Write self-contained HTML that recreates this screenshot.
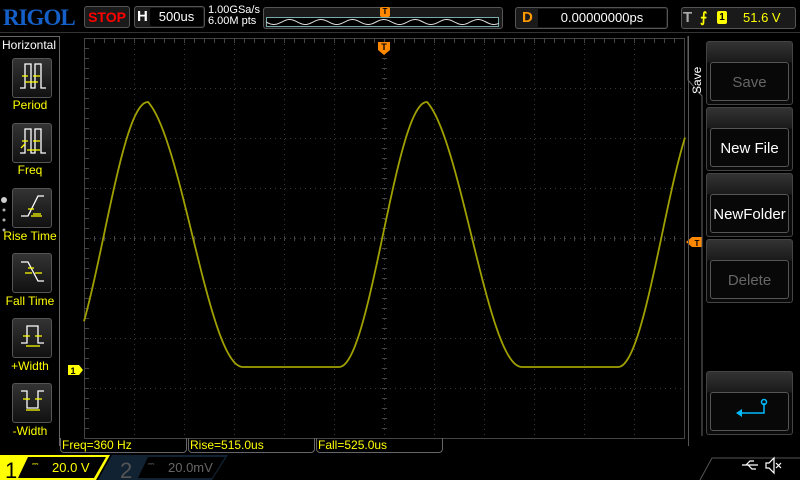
<!DOCTYPE html>
<html><head><meta charset="utf-8"><style>
*{margin:0;padding:0;box-sizing:border-box}
body{width:800px;height:480px;background:#000;overflow:hidden;position:relative;font-family:"Liberation Sans",sans-serif}
.a{position:absolute}
.btn{position:absolute;left:12px;width:40px;height:40px;border:1px solid #555;border-radius:3px;background:linear-gradient(#333,#111)}
.lbl{position:absolute;left:0;width:60px;text-align:center;color:#ff0;font-size:12px}
.rb{position:absolute;left:706px;width:87px;height:64px;border:1px solid #444;border-radius:3px;background:linear-gradient(#333 0,#1a1a1a 20px,#0a0a0a 21px)}
.rb div{position:absolute;left:3px;right:3px;top:20px;bottom:3px;border:1px solid #555;border-radius:3px;background:#080808;text-align:center;line-height:40px;font-size:15px;color:#fff}
.meas{position:absolute;top:438px;height:15px;border:1px solid #666;border-top:none;border-radius:0 0 4px 4px;color:#ff0;font-size:12px;line-height:14px;padding-left:1px}
</style></head><body>
<div class="a" style="left:3px;top:5px;color:#1560c8;font-family:'Liberation Serif',serif;font-weight:bold;font-size:23px;letter-spacing:-1px">RIGOL</div>
<div class="a" style="left:84px;top:6px;width:46px;height:22px;border:1px solid #555;border-radius:3px;background:#1a1a1a;color:#f00;font-weight:bold;font-size:14px;text-align:center;line-height:20px">STOP</div>
<div class="a" style="left:134px;top:6px;width:71px;height:22px;border:1px solid #555;border-radius:3px;background:#1a1a1a"></div>
<div class="a" style="left:137px;top:8px;color:#fff;font-weight:bold;font-size:15px">H</div>
<div class="a" style="left:150px;top:8px;width:53px;height:18px;background:#000;border-radius:2px;color:#fff;font-size:13px;text-align:center;line-height:18px">500us</div>
<div class="a" style="left:208px;top:5px;color:#fff;font-size:11px;line-height:11px">1.00GSa/s<br>6.00M pts</div>
<div class="a" style="left:263px;top:7px;width:240px;height:22px;border:1px solid #555;border-radius:3px;background:#1a1a1a"></div>
<svg class="a" style="left:266px;top:17px" width="234" height="11"><rect x="0.5" y="0.5" width="232" height="9" fill="#000" stroke="#7aa" stroke-width="1"/><path id="sw" d="" fill="none" stroke="#ddd" stroke-width="1"/></svg>
<div class="a" style="left:380px;top:7px;width:10px;height:10px;background:#f80;border-radius:2px;color:#000;font-size:8px;text-align:center;line-height:10px;font-weight:bold">T</div>
<div class="a" style="left:515px;top:7px;width:153px;height:22px;border:1px solid #555;border-radius:3px;background:#1a1a1a"></div>
<div class="a" style="left:522px;top:9px;color:#f90;font-weight:bold;font-size:15px">D</div>
<div class="a" style="left:538px;top:9px;width:128px;height:18px;background:#000;color:#fff;font-size:13px;text-align:center;line-height:18px">0.00000000ps</div>
<div class="a" style="left:681px;top:7px;width:115px;height:22px;border:1px solid #555;border-radius:3px;background:#1a1a1a"></div>
<div class="a" style="left:683px;top:9px;color:#aaa;font-weight:bold;font-size:15px">T</div>
<div class="a" style="left:700px;top:9px;color:#ff0;font-size:14px;font-weight:bold">⨍</div>
<div class="a" style="left:717px;top:11px;width:10px;height:13px;background:#ff0;border-radius:2px;color:#000;font-size:10px;text-align:center;line-height:13px;font-weight:bold">1</div>
<div class="a" style="left:743px;top:10px;color:#ff0;font-size:13px">51.6 V</div>
<div class="a" style="left:0;top:32px;width:800px;height:1px;background:#333"></div>

<div class="a" style="left:0;top:36px;width:60px;height:410px;border-right:1px solid #666;border-top:1px solid #666"></div>
<div class="a" style="left:2px;top:38px;color:#fff;font-size:12px">Horizontal</div>
<div class="btn" style="top:58px"></div><div class="lbl" style="top:98px">Period</div>
<div class="btn" style="top:123px"></div><div class="lbl" style="top:163px">Freq</div>
<div class="btn" style="top:188px"></div><div class="lbl" style="top:229px">Rise Time</div>
<div class="btn" style="top:253px"></div><div class="lbl" style="top:294px">Fall Time</div>
<div class="btn" style="top:318px"></div><div class="lbl" style="top:359px">+Width</div>
<div class="btn" style="top:383px"></div><div class="lbl" style="top:424px">-Width</div>
<svg class="a" style="left:0;top:0" width="60" height="440" fill="none" stroke-width="1.3">
<g stroke="#fff"><path d="M20 88H25V64H31V88H35V64H41V88H46"/><path d="M20 153H25V129H31V153H35V129H41V153H46"/><path d="M21 216H28L38 196H44"/><path d="M21 262H28L38 281H44"/><path d="M21 343H27V326H38V343H44"/><path d="M21 391H27V408H38V391H44"/></g>
<g stroke="#ff0"><path d="M22 76H28M33 76H40M25 82H38"/><path d="M22 141H28M33 141H40M27 150H40M21 148L25 144"/><path d="M28 209H34M33 214H41M31 216H42"/><path d="M28 268H34M35 273H42M25 273H32"/><path d="M23 336H30M35 336H42M26 346H40"/><path d="M23 399H30M35 399H42M26 410H40"/></g>
<g fill="#aaa" stroke="none"><circle cx="4" cy="200" r="3" fill="#ccc"/><circle cx="4" cy="210" r="1.5"/><circle cx="4" cy="220" r="1.5"/><circle cx="4" cy="230" r="1.5"/></g>
</svg>

<svg class="a" style="left:0;top:0" width="800" height="480">
<g id="grid" stroke="#3a3a3a" stroke-width="1" stroke-dasharray="1,4"></g>
<rect x="84.5" y="38.5" width="600" height="400" fill="none" stroke="#444"/>
<g id="ticks" stroke="#444"></g>
<path id="wave" fill="none" stroke="#a0a000" stroke-width="1.8"/>
<path d="M378 42h12v8l-6 5l-6-5z" fill="#f80"/>
<text x="384" y="50" font-size="9" font-weight="bold" text-anchor="middle" fill="#000" font-family="Liberation Sans">T</text>
<path d="M686 242l6-5h10v10h-10z" fill="#f80"/>
<text x="697" y="246" font-size="8" font-weight="bold" text-anchor="middle" fill="#000" font-family="Liberation Sans">T</text>
<path d="M68 365h11l4 5l-4 5h-11z" fill="#ff0"/>
<text x="73" y="374" font-size="9" font-weight="bold" text-anchor="middle" fill="#000" font-family="Liberation Sans">1</text>
</svg>

<div class="a" style="left:688px;top:36px;width:112px;height:410px;border-left:1px solid #555"></div>
<svg class="a" style="left:680px;top:36px" width="30" height="420"><path d="M8 0V44L22 60V400" fill="none" stroke="#666"/></svg>
<div class="a" style="left:690px;top:94px;color:#fff;font-size:12px;transform:rotate(-90deg);transform-origin:left top">Save</div>
<div class="rb" style="top:41px"><div style="color:#666">Save</div></div>
<div class="rb" style="top:107px"><div>New File</div></div>
<div class="rb" style="top:173px"><div>NewFolder</div></div>
<div class="rb" style="top:239px"><div style="color:#666">Delete</div></div>
<div class="rb" style="top:371px"><div></div></div>
<svg class="a" style="left:730px;top:395px" width="50" height="30"><path d="M34 8V18H12" fill="none" stroke="#0bf" stroke-width="1.5"/><circle cx="34" cy="7" r="2.5" fill="none" stroke="#0bf" stroke-width="1.5"/><path d="M12 14l-6 4l6 4z" fill="#0bf"/></svg>

<div class="meas" style="left:60px;width:127px">Freq=360 Hz</div>
<div class="meas" style="left:188px;width:127px">Rise=515.0us</div>
<div class="meas" style="left:316px;width:127px">Fall=525.0us</div>

<svg class="a" style="left:0;top:455px" width="800" height="25">
<path d="M0 0H110L96 25H0z" fill="#ff0"/>
<path d="M28 2H106L94 23H18z" fill="#000"/>
<path d="M112 0H228L212 25H98z" fill="#123"/>
<path d="M148 2H225L212 23H138z" fill="#000"/>
<path d="M700 25L712 3H800" fill="none" stroke="#555"/>
<text x="5" y="23" font-size="22" fill="#000" font-family="Liberation Sans">1</text>
<text x="32" y="11" font-size="8" fill="#ff0" font-family="Liberation Sans">⎓</text>
<text x="52" y="17" font-size="13" fill="#ff0" font-family="Liberation Sans">20.0 V</text>
<text x="120" y="23" font-size="22" fill="#555" font-family="Liberation Sans">2</text>
<text x="148" y="11" font-size="8" fill="#666" font-family="Liberation Sans">⎓</text>
<text x="168" y="17" font-size="13" fill="#666" font-family="Liberation Sans">20.0mV</text>
<g stroke="#fff" fill="none" stroke-width="1.2"><path d="M742 10H758M746 10L750 6H754M748 10L752 14H756"/><path d="M766 8h3l5-5v15l-5-5h-3z"/><path d="M776 8l5 5M781 8l-5 5"/></g>
</svg>

<script>
var g=document.getElementById('grid'),s='';
for(var x=134;x<684;x+=50)s+='<line x1="'+(x+.5)+'" y1="39" x2="'+(x+.5)+'" y2="438"/>';
for(var y=88;y<438;y+=50)s+='<line x1="85" y1="'+(y+.5)+'" x2="684" y2="'+(y+.5)+'"/>';
g.innerHTML=s;
var t='';
for(var x=94;x<684;x+=10){t+='M'+(x+.5)+' 39v4M'+(x+.5)+' 236v5';}
for(var y=48;y<438;y+=10){t+='M85 '+(y+.5)+'h4M382 '+(y+.5)+'h5';}
document.getElementById('ticks').innerHTML='<path d="'+t+'"/>';
function cs(u){return (1-Math.cos(Math.PI*u))/2;}
function gf(u){return 0.25*Math.sin(Math.PI*u/2)+0.75*cs(u);}
function f(x){var P=279,p=((x-148)%P+P)%P,top=102,bot=367,A=bot-top;
 if(p<95)return top+A*gf(p/95);
 if(p<191)return bot;
 return top+A*cs((279-p)/88);}
var d='';for(var x=84;x<=685;x++){d+=(x==84?'M':'L')+x+' '+f(x).toFixed(1);}
document.getElementById('wave').setAttribute('d',d);
var w='';for(var x=0;x<=233;x++){w+=(x?'L':'M')+x+' '+(5+2.5*Math.sin(x/5)).toFixed(1);}
document.getElementById('sw').setAttribute('d',w);
</script>
</body></html>
